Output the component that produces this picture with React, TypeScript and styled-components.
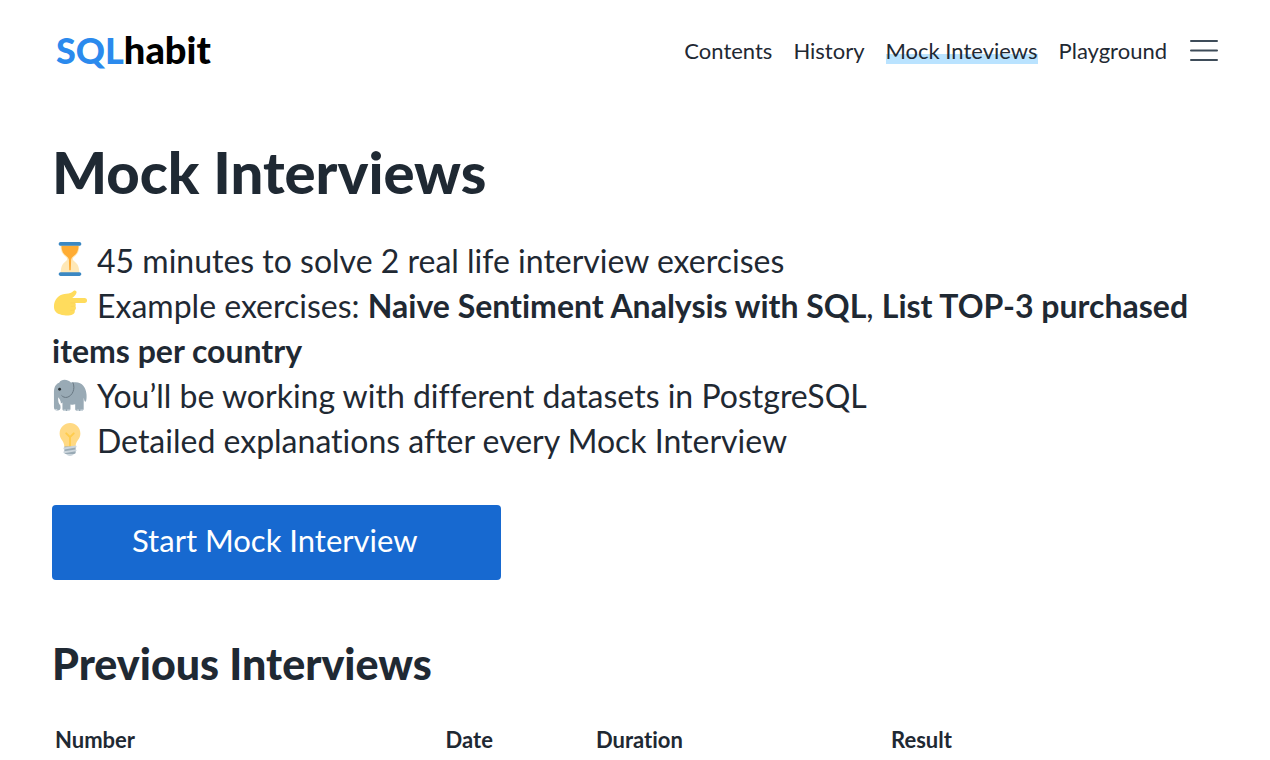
import React from "react";
import styled, { createGlobalStyle } from "styled-components";

const ink = "#1f2933";

const GlobalStyle = createGlobalStyle`
  *, *::before, *::after { box-sizing: border-box; }
  body {
    margin: 0;
    background: #fff;
    color: ${ink};
    font-family: Lato, "Open Sans", "Liberation Sans", sans-serif;
    font-variant-ligatures: none;
  }
`;

const Page = styled.div`
  padding: 24px 52px 0;
`;

const Header = styled.header`
  display: flex;
  align-items: center;
  justify-content: space-between;
  height: 54px;
`;

const Logo = styled.a`
  padding: 0 0 4px 4px;
  color: #000;
  font-size: 38px;
  font-weight: 900;
  line-height: 50px;
  text-decoration: none;
`;

const LogoAccent = styled.span`
  color: #2b8aed;
  font-size: 36px;
`;

const Nav = styled.nav`
  display: flex;
  align-items: center;
  gap: 21px;
`;

const NavLink = styled.a<{ $active?: boolean }>`
  color: ${ink};
  font-size: 22px;
  line-height: 26px;
  text-decoration: none;
  background: ${(p) =>
    p.$active ? "linear-gradient(transparent 60%, #bae3ff 60%)" : "none"};
`;

const MenuButton = styled.button`
  display: flex;
  margin-left: 2px;
  padding: 0;
  border: 0;
  background: none;
  color: #3e4c59;
  cursor: pointer;
`;

const Title = styled.h1`
  margin: 60px 0 32px;
  font-size: 58px;
  font-weight: 900;
  line-height: 68px;
`;

const Features = styled.ul`
  margin: 0;
  padding: 0;
  list-style: none;
  font-size: 32px;
  line-height: 45px;
`;

const Icon = styled.svg`
  width: 34px;
  height: 34px;
  margin: 0 10px 0 1px;
  vertical-align: -3px;
`;

const StartButton = styled.button`
  display: block;
  width: 449px;
  max-width: 100%;
  margin: 42px 0 56px;
  padding: 13px 40px 18px 80px;
  border: 0;
  border-radius: 4px;
  background: #1769d0;
  color: #fff;
  font-family: inherit;
  font-size: 31px;
  line-height: 44px;
  text-align: left;
  cursor: pointer;
`;

const Subtitle = styled.h2`
  margin: 0 0 36px;
  font-size: 43px;
  font-weight: 900;
  line-height: 56px;
`;

const Table = styled.table`
  width: 100%;
  table-layout: fixed;
  border-collapse: collapse;
`;

const HeadCell = styled.th<{ $width?: string }>`
  width: ${(p) => p.$width ?? "auto"};
  padding: 0 3px;
  font-size: 22px;
  font-weight: 700;
  line-height: 24px;
  text-align: left;
`;

const Hourglass = () => (
  <Icon viewBox="0 0 36 36" aria-hidden="true">
    <path fill="#ffe8b6" d="M21 18c0-2.001 3.246-3.369 5-6 2-3 2-10 2-10H8s0 7 2 10c1.754 2.631 5 3.999 5 6s-3.246 3.369-5 6c-2 3-2 10-2 10h20s0-7-2-10c-1.754-2.631-5-3.999-5-6z" />
    <path fill="#ffac33" d="M9 4h18c0 3.500-.9 6.500-2.500 8.500-1.800 2.200-4.800 3.300-5.300 6L18.800 30h-1.600l-.4-11.500c-.5-2.700-3.500-3.800-5.300-6C9.900 10.500 9 7.500 9 4z" />
    <path fill="#3b88c3" d="M30 34c0 1.104-.896 2-2 2H8c-1.104 0-2-.896-2-2s.896-2 2-2h20c1.104 0 2 .896 2 2zm0-32c0 1.104-.896 2-2 2H8C6.896 4 6 3.104 6 2s.896-2 2-2h20c1.104 0 2 .896 2 2z" />
  </Icon>
);

const PointingHand = () => (
  <Icon viewBox="0 0 36 36" aria-hidden="true">
    <path fill="#ffdc5d" d="M1 21C1 13 6 8.500 12 7.500c3-.7 6-.6 8-2l2-1.500c1.600-1 3.500.4 2.800 2.400-.7 2.200-2.600 4-4.500 5.300H33.500a2.600 2.600 0 0 1 0 5.200H23.500c.7 1 .8 2.300.2 3.400 1 1.500.7 3.400-.8 4.400.6 2-.4 3.700-2.200 4.300-2 1-5.200 1.500-8.700 1C5 29.300 1 26.500 1 21z" />
    <path fill="none" stroke="#f7cf55" strokeWidth=".6" d="M18.500 16.900h5M19 20.600c2-.4 3.500-.4 4.700-.3M18.500 24.800c1.500-.3 3-.3 4.400-.1" />
  </Icon>
);

const Elephant = () => (
  <Icon viewBox="0 0 36 36" aria-hidden="true">
    <g transform="translate(0 1)">
      <path fill="#99aab5" d="M35.500 17.500C34.800 9.500 31 5 24 4.500c-2-.2-3.500.1-5 .2C15 1 9 1 6.500 5 2.500 6.500 1 10 1 16v15c0 2.500 1.500 3.500 3.700 3.500 2.300 0 3.300-1.300 3.300-3.500-.5-2 0-4.500 2-5v7c0 1.500 1 2 4.500 2 3 0 4-.8 4-2v-5c2 .5 3.500.4 5-.2v5.200c0 1.500 1 2 4.500 2 3.200 0 4.500-.7 4.500-2V21c.5 2 .8 4.500 1.800 4.200 1.200-.3 1.400-4.200 1.200-7.700z" />
      <path fill="none" stroke="#66757f" strokeWidth="1" d="M21 4.800c3 6.700-.5 14.200-6 15.700-2.500.5-4.500-.3-6-2" />
      <circle cx="7" cy="12" r="1.500" fill="#292f33" />
      <path fill="#fff" d="M5.500 20.500c-.3 4.500.5 7 2.800 9 .5-3-.3-6.500-2.800-9z" />
      <path fill="#ccd6dd" d="M11 33.500h2.500V35H12zm4 0h3c0 1-.6 1.500-1.500 1.500H15zm10 0h2.500V35H26zm4 0h3c0 1-.6 1.500-1.500 1.500H29zM2 33h2.500v1.500H3z" />
    </g>
  </Icon>
);

const Bulb = () => (
  <Icon viewBox="0 0 36 36" aria-hidden="true">
    <g transform="translate(0 1)">
      <path fill="#ffd983" d="M29 11.060c0 6.439-5 7.439-5 13.440 0 3.098-3.123 3.359-5.500 3.359-2.053 0-6.586-.779-6.586-3.361C11.914 18.500 7 17.500 7 11.060 7 5.029 12.285.140 18.083.140 23.883.140 29 5.029 29 11.060z" />
      <path fill="#ccd6dd" d="M22.167 32.500c0 .828-2.234 2.500-4.167 2.500-1.933 0-4.167-1.672-4.167-2.500 0-.828 2.233-.500 4.167-.500 1.933 0 4.167-.328 4.167.500z" />
      <path fill="#ffcc4d" d="M22.707 10.293a1 1 0 0 0-1.414 0L18 13.586l-3.293-3.293a1 1 0 1 0-1.414 1.414L17 15.414V26a1 1 0 1 0 2 0V15.414l3.707-3.707a1 1 0 0 0 0-1.414z" />
      <path fill="#99aab5" d="M24 31a2 2 0 0 1-2 2h-8a2 2 0 0 1-2-2v-6h12v6z" />
      <path fill="#ccd6dd" d="M11.999 32a1 1 0 0 1-.163-1.986l12-2a1 1 0 0 1 .328 1.972l-12 2-.165.014zm0-4a1 1 0 0 1-.163-1.986l12-2a1 1 0 0 1 .328 1.972l-12 2-.165.014z" />
    </g>
  </Icon>
);

export default function App() {
  return (
    <Page>
      <GlobalStyle />
      <Header>
        <Logo href="#home">
          <LogoAccent>SQL</LogoAccent>habit
        </Logo>
        <Nav aria-label="Main">
          <NavLink href="#contents">Contents</NavLink>
          <NavLink href="#history">History</NavLink>
          <NavLink href="#mock-interviews" $active aria-current="page">
            Mock Inteviews
          </NavLink>
          <NavLink href="#playground">Playground</NavLink>
          <MenuButton type="button" aria-label="Menu">
            <svg width="28" height="26" viewBox="0 0 28 26" aria-hidden="true">
              <path d="M1 3h26M1 12.500h26M1 22h26" stroke="currentColor" strokeWidth="2" strokeLinecap="round" />
            </svg>
          </MenuButton>
        </Nav>
      </Header>
      <main>
        <Title>Mock Interviews</Title>
        <Features>
          <li>
            <Hourglass />
            45 minutes to solve 2 real life interview exercises
          </li>
          <li>
            <PointingHand />
            Example exercises: <b>Naive Sentiment Analysis with SQL</b>,{" "}
            <b>List TOP-3 purchased items per country</b>
          </li>
          <li>
            <Elephant />
            You’ll be working with different datasets in PostgreSQL
          </li>
          <li>
            <Bulb />
            Detailed explanations after every Mock Interview
          </li>
        </Features>
        <StartButton type="button">Start Mock Interview</StartButton>
        <Subtitle>Previous Interviews</Subtitle>
        <Table>
          <thead>
            <tr>
              <HeadCell scope="col" $width="33.5%">Number</HeadCell>
              <HeadCell scope="col" $width="12.9%">Date</HeadCell>
              <HeadCell scope="col" $width="25.3%">Duration</HeadCell>
              <HeadCell scope="col">Result</HeadCell>
            </tr>
          </thead>
        </Table>
      </main>
    </Page>
  );
}
